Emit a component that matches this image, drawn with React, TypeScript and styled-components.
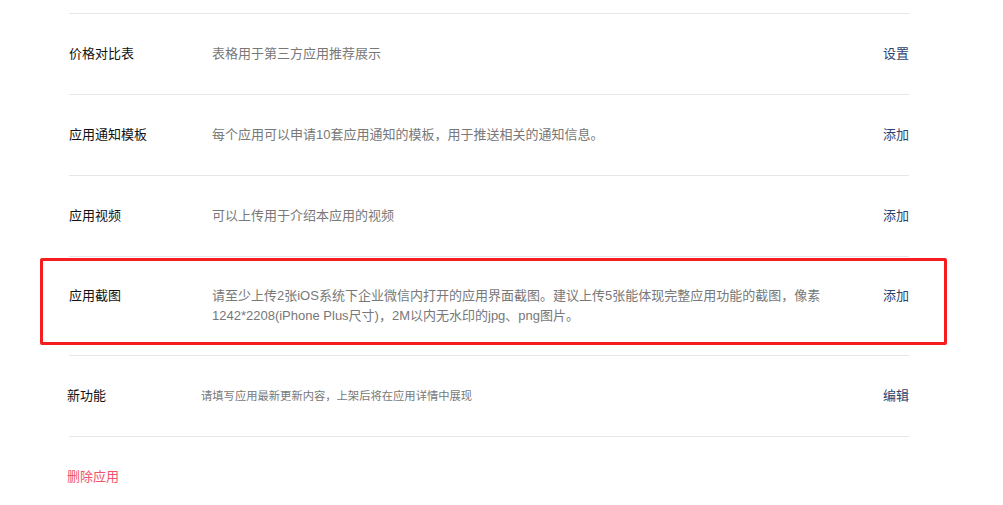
import React from "react";
import styled, { createGlobalStyle } from "styled-components";

type Item = {
  name: string;
  desc: React.ReactNode;
  action: string;
  small?: boolean;
  marked?: boolean;
};

const items: Array<Item> = [
  { name: "价格对比表", desc: "表格用于第三方应用推荐展示", action: "设置" },
  {
    name: "应用通知模板",
    desc: "每个应用可以申请10套应用通知的模板，用于推送相关的通知信息。",
    action: "添加",
  },
  { name: "应用视频", desc: "可以上传用于介绍本应用的视频", action: "添加" },
  {
    name: "应用截图",
    desc: (
      <>
        请至少上传2张iOS系统下企业微信内打开的应用界面截图。建议上传5张能体现完整应用功能的截图，像素
        <br />
        1242*2208(iPhone Plus尺寸)，2M以内无水印的jpg、png图片。
      </>
    ),
    action: "添加",
    marked: true,
  },
  {
    name: "新功能",
    desc: "请填写应用最新更新内容，上架后将在应用详情中展现",
    action: "编辑",
    small: true,
  },
];

const App: React.FC = () => {
  return (
    <>
      <GlobalStyle />
      <Page>
        <List>
          {items.map((item) => (
            <Row key={item.name} tight={item.marked}>
              <Name small={item.small}>{item.name}</Name>
              <Desc small={item.small}>{item.desc}</Desc>
              <Action>{item.action}</Action>
              {item.marked && <Highlight />}
            </Row>
          ))}
        </List>
        <DeleteLink>删除应用</DeleteLink>
      </Page>
    </>
  );
};

export default App;

const GlobalStyle = createGlobalStyle`
  body {
    margin: 0;
    background: #fff;
    font-family: "Liberation Sans", Arial, "Noto Sans CJK SC", sans-serif;
  }
`;

const Page = styled.div`
  width: 840px;
  padding: 13px 0 0 69px;
`;

const List = styled.div`
  border-top: 1px solid #e4e6e9;
`;

const Row = styled.div<{ tight?: boolean }>`
  position: relative;
  display: flex;
  align-items: flex-start;
  padding: ${(p) => (p.tight ? "29px 0" : "30px 0")};
  border-bottom: 1px solid #e4e6e9;
  font-size: 13px;
  line-height: 20px;
`;

const Name = styled.div<{ small?: boolean }>`
  flex: 0 0 ${(p) => (p.small ? "134px" : "143px")};
  margin-left: ${(p) => (p.small ? "-2px" : "0")};
  color: #111;
`;

const Desc = styled.div<{ small?: boolean }>`
  flex: 1;
  color: #787878;
  font-size: ${(p) => (p.small ? "11.3px" : "13px")};
`;

const Action = styled.div`
  flex: 0 0 auto;
  margin-left: 40px;
  color: #2b4370;
  cursor: pointer;
`;

const Highlight = styled.div`
  position: absolute;
  left: -29px;
  right: -38px;
  top: 1px;
  bottom: 10px;
  border: 3px solid #f51d1d;
  border-radius: 2px;
  pointer-events: none;
`;

const DeleteLink = styled.div`
  padding-top: 30px;
  margin-left: -2px;
  font-size: 13px;
  line-height: 20px;
  color: #f2536c;
  cursor: pointer;
`;
